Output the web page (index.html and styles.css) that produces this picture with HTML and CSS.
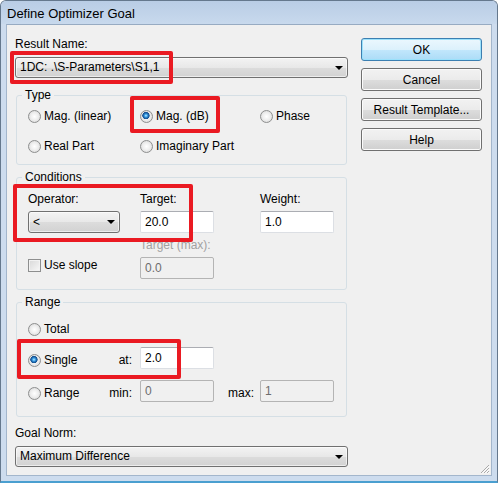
FILE: index.html
```html
<!DOCTYPE html>
<html>
<head>
  <meta charset="UTF-8">
  <title>Define Optimizer Goal</title>
  <link rel="stylesheet" href="styles.css">
</head>
<body>
  <div class="window">
    <div class="titlebar">Define Optimizer Goal</div>
    <div class="client">
      <div class="main">
        <div class="caption">Result Name:</div>
        <div class="combo combo-wide"><span>1DC: .\S-Parameters\S1,1</span><i class="arrow"></i></div>

        <fieldset class="group group-type">
          <legend>Type</legend>
          <div class="opts">
            <label class="opt"><input type="radio" name="type">Mag. (linear)</label>
            <label class="opt"><input type="radio" name="type" checked>Mag. (dB)</label>
            <label class="opt"><input type="radio" name="type">Phase</label>
            <label class="opt"><input type="radio" name="type">Real Part</label>
            <label class="opt"><input type="radio" name="type">Imaginary Part</label>
          </div>
        </fieldset>

        <fieldset class="group group-cond">
          <legend>Conditions</legend>
          <div class="cond">
            <div class="caption">Operator:</div>
            <div class="caption">Target:</div>
            <div class="caption">Weight:</div>
            <div class="combo combo-op"><span>&lt;</span><i class="arrow"></i></div>
            <input class="field" type="text" value="20.0">
            <input class="field" type="text" value="1.0">
            <div></div>
            <div class="caption dim">Target (max):</div>
            <div></div>
            <label class="opt"><input type="checkbox">Use slope</label>
            <input class="field" type="text" value="0.0" disabled>
          </div>
        </fieldset>

        <fieldset class="group group-range">
          <legend>Range</legend>
          <label class="opt"><input type="radio" name="range">Total</label>
          <div class="line line-single">
            <label class="opt opt-col"><input type="radio" name="range" checked>Single</label>
            <span class="tag">at:</span>
            <input class="field" type="text" value="2.0">
          </div>
          <div class="line line-range">
            <label class="opt opt-col"><input type="radio" name="range">Range</label>
            <span class="tag">min:</span>
            <input class="field" type="text" value="0" disabled>
            <span class="tag tag-max">max:</span>
            <input class="field" type="text" value="1" disabled>
          </div>
        </fieldset>

        <div class="caption norm-caption">Goal Norm:</div>
        <div class="combo combo-wide"><span>Maximum Difference</span><i class="arrow"></i></div>
      </div>

      <div class="buttons">
        <button class="btn btn-default">OK</button>
        <button class="btn">Cancel</button>
        <button class="btn">Result Template...</button>
        <button class="btn">Help</button>
      </div>

      <svg class="grip" width="12" height="12" viewBox="0 0 12 12">
        <path d="M11 3 L3 11 M11 6 L6 11 M11 9 L9 11" stroke="#a9a9a9" stroke-width="1"/>
        <path d="M11.5 4 L4 11.5 M11.5 7 L7 11.5 M11.5 10 L10 11.5" stroke="#ffffff" stroke-width="1"/>
      </svg>
    </div>

    <!-- red annotation frames -->
    <div class="mark mark-result"></div>
    <div class="mark mark-db"></div>
    <div class="mark mark-cond"></div>
    <div class="mark mark-single"></div>
  </div>
</body>
</html>
```

FILE: styles.css
```css
html, body {
  margin: 0;
  overflow: hidden;
}
body {
  font-family: "Liberation Sans", Arial, sans-serif;
  font-size: 12px;
  color: #000;
}
* {
  box-sizing: border-box;
}
.window {
  position: relative;
  width: 498px;
  height: 483px;
  padding: 0 5px 4px 5px;
  background: #cddcee;
  border: 1px solid #65788d;
  border-bottom: 2px solid #4a9fd0;
  border-radius: 6px 6px 0 0;
}
.titlebar {
  height: 23px;
  margin: 0 -5px;
  padding: 2px 0 0 6px;
  line-height: 21px;
  font-size: 13px;
  background: linear-gradient(#b9cde5, #c8d9ed);
  border-radius: 5px 5px 0 0;
}
.client {
  position: relative;
  display: flex;
  height: 452px;
  background: #f0f0f0;
  border: 1px solid #a3b6cc;
  border-top-color: #97abc2;
}
.main {
  width: 333px;
  margin-left: 8px;
  padding-top: 12px;
}
.caption {
  height: 14px;
  line-height: 14px;
  white-space: nowrap;
}
.dim {
  color: #a2a2a2;
}

/* drop-down boxes */
.combo {
  position: relative;
  height: 21px;
  line-height: 19px;
  padding-left: 4px;
  border: 1px solid #707070;
  border-radius: 3px;
  background: linear-gradient(#f3f3f3, #e8e8e8 50%, #dcdcdc 51%, #d2d2d2);
  box-shadow: inset 0 0 0 1px rgba(255, 255, 255, 0.6);
}
.combo-wide {
  margin-top: 6px;
}
.arrow {
  position: absolute;
  right: 4px;
  top: 8px;
  width: 0;
  height: 0;
  border-left: 4px solid transparent;
  border-right: 4px solid transparent;
  border-top: 4px solid #000;
}
.combo-op {
  width: 92px;
  height: 22px;
  line-height: 20px;
}

/* group boxes */
.group {
  margin: 0 1px;
  padding: 0 0 0 11px;
  border: 1px solid #d5dfe5;
  border-radius: 3px;
  min-width: 0;
}
.group legend {
  margin-left: -6px;
  padding: 0 3px;
  line-height: 14px;
}
.group-type {
  margin-top: 10px;
  padding-top: 6px;
  padding-bottom: 10px;
}
.group-cond {
  margin-top: 5px;
  padding-top: 8px;
  padding-bottom: 10px;
}
.group-range {
  margin-top: 5px;
  padding-top: 12px;
  padding-bottom: 14px;
}
.opts {
  display: grid;
  grid-template-columns: 112px 120px auto;
  row-gap: 14px;
}
.cond {
  display: grid;
  grid-template-columns: 112px 120px auto;
  grid-template-rows: 14px 22px 14px 22px;
  row-gap: 5px;
}

/* radio buttons and check boxes */
.opt {
  display: flex;
  align-items: center;
  gap: 3px;
  height: 16px;
  line-height: 16px;
  white-space: nowrap;
}
.opt input {
  appearance: none;
  -webkit-appearance: none;
  margin: 0;
  width: 13px;
  height: 13px;
  flex: none;
}
.opt input[type="radio"] {
  border-radius: 50%;
  border: 1px solid #8d8e8e;
  background: radial-gradient(circle at 50% 50%, #ffffff 0, #efefef 45%, #d2d2d2 100%);
}
.opt input[type="radio"]:checked {
  background:
    radial-gradient(circle at 45% 42%, #c9f1ff 0, #4aaef0 1.2px, #1c64aa 2.6px, #16508e 3.4px, rgba(22, 80, 142, 0) 3.9px),
    radial-gradient(circle at 50% 50%, #ffffff 0, #efefef 45%, #d2d2d2 100%);
}
.opt input[type="checkbox"] {
  border: 1px solid #8e8f8f;
  background: linear-gradient(135deg, #d8d8d8, #f8f8f8);
  box-shadow: inset 0 0 0 1px #f2f2f2;
}

/* text fields */
.field {
  width: 74px;
  height: 22px;
  margin: 0;
  padding: 0 4px;
  font-family: inherit;
  font-size: 12px;
  color: #000;
  background: #fff;
  border: 1px solid #dcdfe4;
  border-top-color: #abadb3;
  border-radius: 2px;
  outline: none;
}
.field:disabled {
  color: #6d6d6d;
  background: #f0f0f0;
  border-color: #b4b4b4;
}

/* range rows */
.line {
  display: flex;
  align-items: flex-start;
  height: 22px;
}
.line-single {
  margin-top: 10px;
}
.line-range {
  margin-top: 11px;
}
.line .opt,
.line .tag {
  margin-top: 5px;
}
.opt-col {
  width: 76px;
}
.tag {
  width: 28px;
  margin-right: 8px;
  line-height: 16px;
  text-align: right;
}
.tag-max {
  width: 40px;
  margin-right: 6px;
}
.norm-caption {
  margin-top: 9px;
}

/* buttons */
.buttons {
  display: flex;
  flex-direction: column;
  gap: 7px;
  margin: 13px 0 0 13px;
}
.btn {
  width: 121px;
  height: 23px;
  padding: 0;
  font-family: inherit;
  font-size: 12px;
  color: #000;
  border: 1px solid #707070;
  border-radius: 3px;
  background: linear-gradient(#f2f2f2, #ebebeb 50%, #dddddd 51%, #cfcfcf);
  box-shadow: inset 0 0 0 1px #fbfbfb;
}
.btn-default {
  border-color: #3c7fb1;
  background: linear-gradient(#ebf7fe, #dcf1fc 50%, #c2e7fc 51%, #acdcf7);
  box-shadow: inset 0 0 0 1px #9be1fb;
}
.grip {
  position: absolute;
  right: 1px;
  bottom: 1px;
}

/* red annotation frames */
.mark {
  position: absolute;
  border: 4px solid #ea1a22;
  border-radius: 2px;
}
.mark-result {
  left: 9px;
  top: 50px;
  width: 163px;
  height: 33px;
}
.mark-db {
  left: 129px;
  top: 95px;
  width: 90px;
  height: 37px;
}
.mark-cond {
  left: 12px;
  top: 183px;
  width: 180px;
  height: 58px;
}
.mark-single {
  left: 16px;
  top: 338px;
  width: 164px;
  height: 40px;
}
```
